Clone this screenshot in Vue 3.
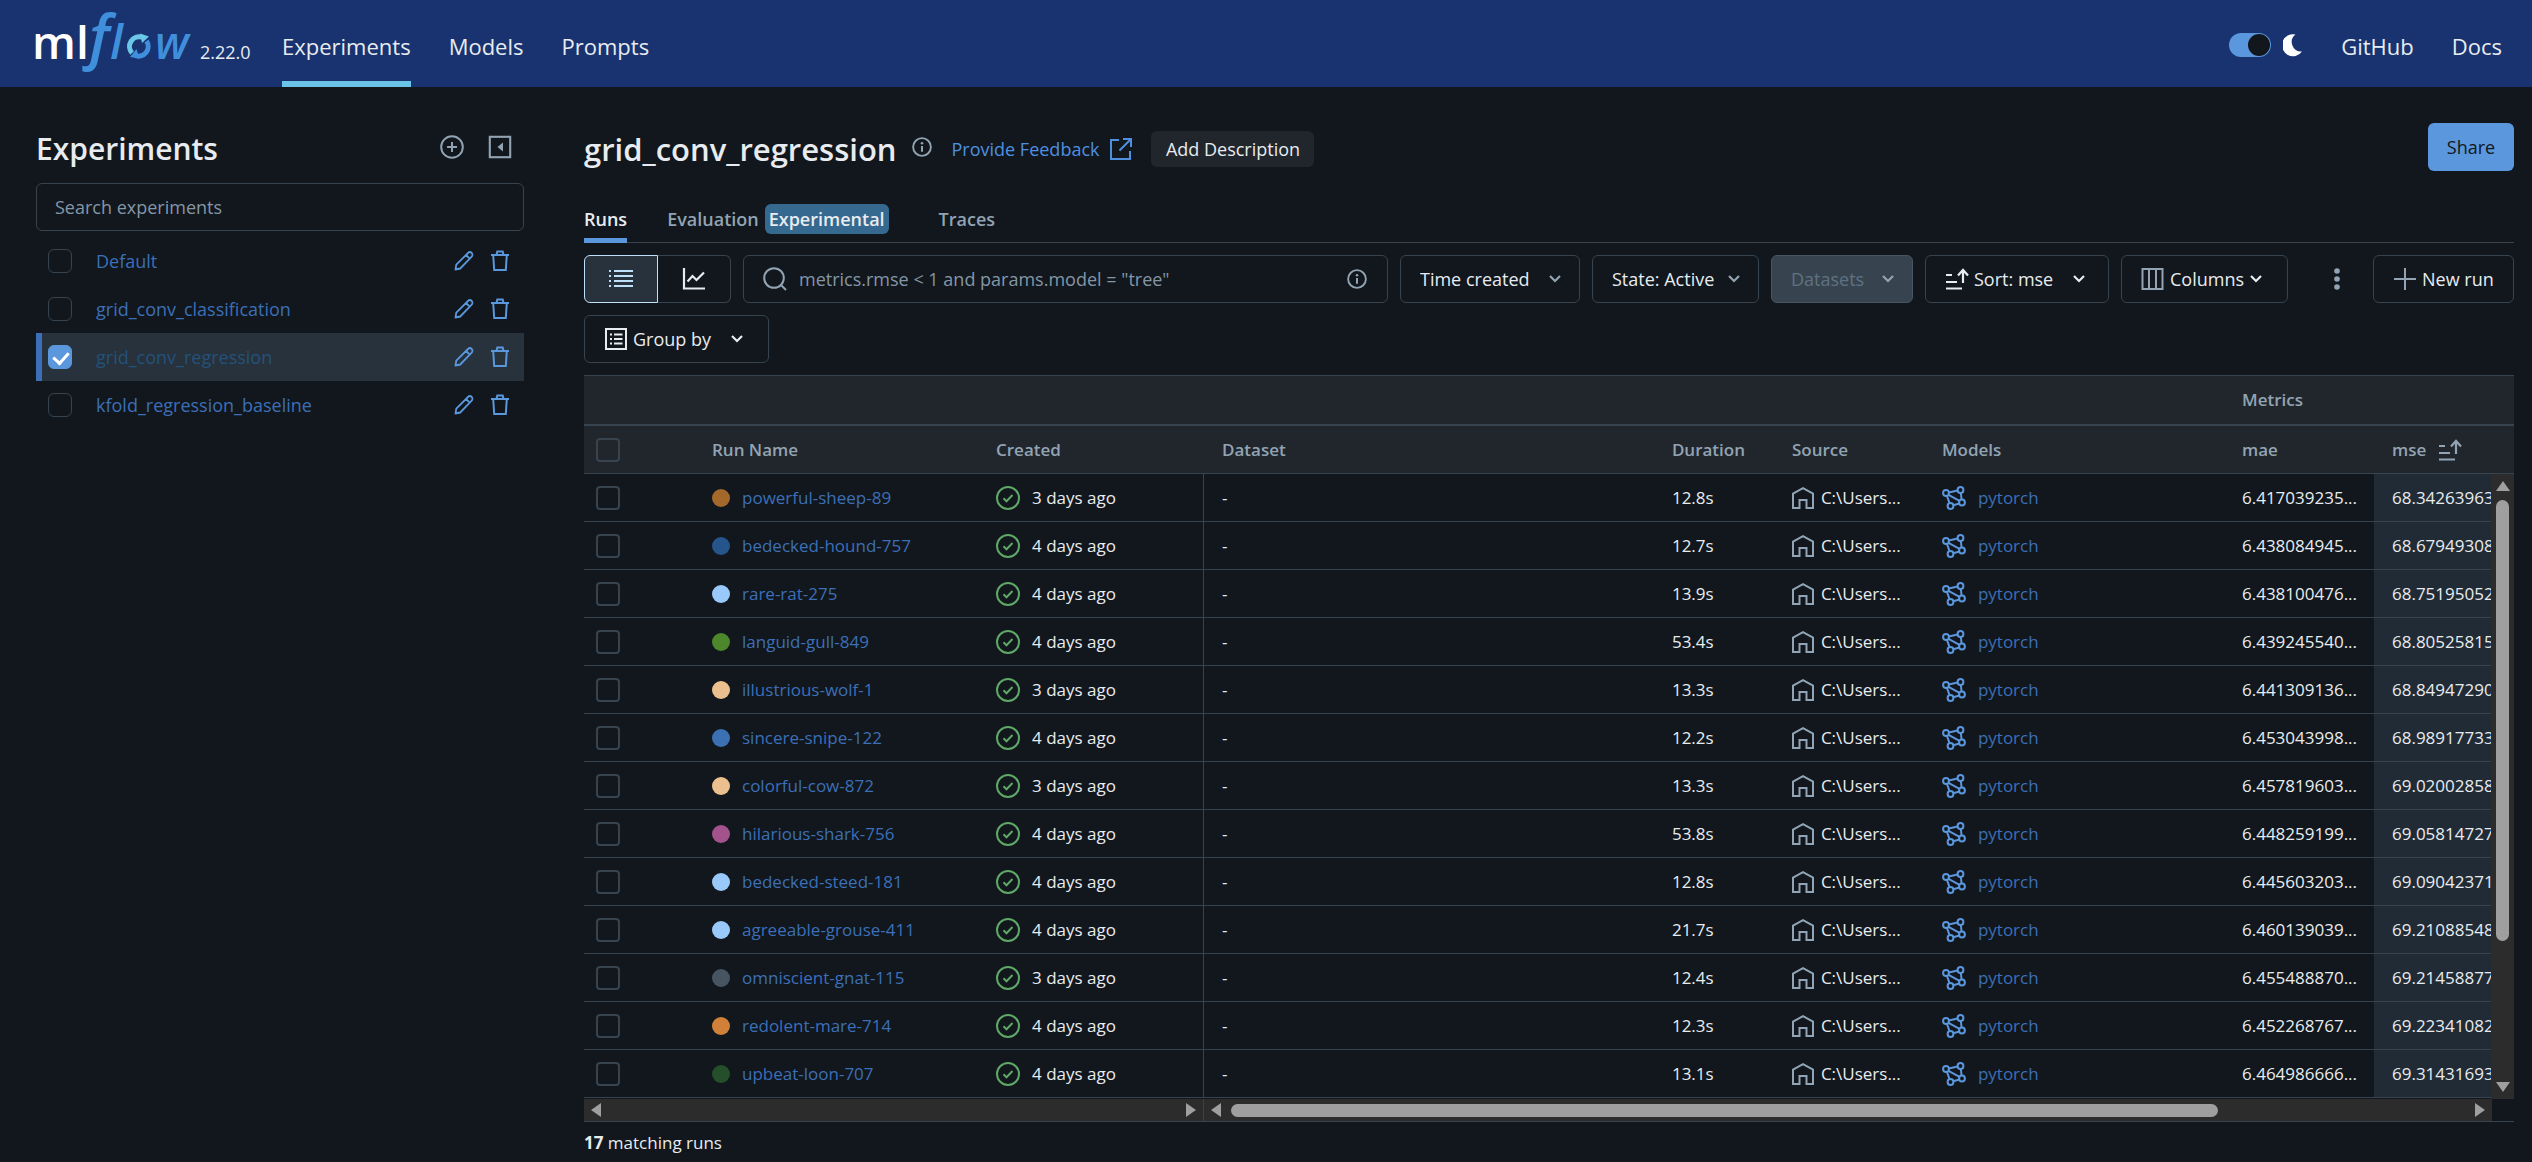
<script setup>
import { ref } from 'vue'

const experiments = ref([
  { name: 'Default', selected: false },
  { name: 'grid_conv_classification', selected: false },
  { name: 'grid_conv_regression', selected: true },
  { name: 'kfold_regression_baseline', selected: false },
])

const runs = [
  { name: 'powerful-sheep-89', color: '#a4682a', created: '3 days ago', duration: '12.8s', mae: '6.417039235...', mse: '68.34263963' },
  { name: 'bedecked-hound-757', color: '#26558c', created: '4 days ago', duration: '12.7s', mae: '6.438084945...', mse: '68.67949308' },
  { name: 'rare-rat-275', color: '#99c8fa', created: '4 days ago', duration: '13.9s', mae: '6.438100476...', mse: '68.75195052' },
  { name: 'languid-gull-849', color: '#4c872b', created: '4 days ago', duration: '53.4s', mae: '6.439245540...', mse: '68.80525815' },
  { name: 'illustrious-wolf-1', color: '#ecc08e', created: '3 days ago', duration: '13.3s', mae: '6.441309136...', mse: '68.84947290' },
  { name: 'sincere-snipe-122', color: '#3b71b3', created: '4 days ago', duration: '12.2s', mae: '6.453043998...', mse: '68.98917733' },
  { name: 'colorful-cow-872', color: '#ecc08e', created: '3 days ago', duration: '13.3s', mae: '6.457819603...', mse: '69.02002858' },
  { name: 'hilarious-shark-756', color: '#a4528c', created: '4 days ago', duration: '53.8s', mae: '6.448259199...', mse: '69.05814727' },
  { name: 'bedecked-steed-181', color: '#99c8fa', created: '4 days ago', duration: '12.8s', mae: '6.445603203...', mse: '69.09042371' },
  { name: 'agreeable-grouse-411', color: '#99c8fa', created: '4 days ago', duration: '21.7s', mae: '6.460139039...', mse: '69.21088548' },
  { name: 'omniscient-gnat-115', color: '#475562', created: '3 days ago', duration: '12.4s', mae: '6.455488870...', mse: '69.21458877' },
  { name: 'redolent-mare-714', color: '#d1803a', created: '4 days ago', duration: '12.3s', mae: '6.452268767...', mse: '69.22341082' },
  { name: 'upbeat-loon-707', color: '#254f2b', created: '4 days ago', duration: '13.1s', mae: '6.464986666...', mse: '69.31431693' },
]
</script>

<template>
  <div class="page">
    <header class="topbar">
      <a href="#" class="brand" aria-label="mlflow">
        <svg width="164" height="87" viewBox="-6 -10 164 87">
          <g class="logo-text">
            <text x="-4" y="49" fill="#fff" font-size="46" font-weight="600">ml</text>
            <g fill="#3f8fdc" font-style="italic" font-weight="600">
              <text x="53" y="48" font-size="60">f</text>
              <text x="74" y="49" font-size="47">l</text>
              <text x="119" y="49" font-size="45">w</text>
            </g>
          </g>
          <path d="M96 43A9.700 9.700 0 0 1 106 27.200" fill="none" stroke="#6bc7e8" stroke-width="5" />
          <path d="M104 23.500l9 3-7 6.500z" fill="#6bc7e8" />
          <path d="M110.500 31A9.700 9.700 0 0 1 99 45.500" fill="none" stroke="#3f8fdc" stroke-width="5" />
          <path d="M94 47l6.500-8 3 9.500z" fill="#3f8fdc" />
        </svg>
      </a>
      <span class="version">2.22.0</span>
      <nav class="nav">
        <a href="#" class="active">Experiments</a>
        <a href="#">Models</a>
        <a href="#">Prompts</a>
      </nav>
      <div class="nav right">
        <label class="theme">
          <input type="checkbox" role="switch" checked aria-label="Dark theme" />
          <svg width="20" height="24" viewBox="0 0 20 24"><path d="M12.500 1.500A11 11 0 1 0 19 18.500 9.500 9.500 0 0 1 12.500 1.500z" fill="#fff" /></svg>
        </label>
        <a href="#">GitHub</a>
        <a href="#">Docs</a>
      </div>
    </header>

    <div class="body">
      <aside class="sidebar">
        <div class="side-head">
          <h2>Experiments</h2>
          <button class="icon-btn" aria-label="Create experiment">
            <svg width="24" height="24" viewBox="0 0 16 16" fill="none" stroke="currentColor" stroke-width="1.300"><circle cx="8" cy="8" r="7.200" /><path d="M8 4.700v6.600M4.700 8h6.600" /></svg>
          </button>
          <button class="icon-btn" aria-label="Collapse sidebar">
            <svg width="24" height="24" viewBox="0 0 16 16"><rect x="1.200" y="1.200" width="13.600" height="13.600" fill="none" stroke="currentColor" stroke-width="1.400" /><path d="M10 5v6L6.300 8z" fill="currentColor" /></svg>
          </button>
        </div>
        <input class="side-search" type="text" placeholder="Search experiments" aria-label="Search experiments" />
        <ul class="exp-list">
          <li v-for="e in experiments" :key="e.name" :class="{ selected: e.selected }">
            <input v-model="e.selected" type="checkbox" class="check" :aria-label="e.name" />
            <a href="#">{{ e.name }}</a>
            <button class="icon-btn blue" aria-label="Rename">
              <svg width="20" height="20" viewBox="0 0 20 20" fill="none" stroke="currentColor" stroke-width="1.800" stroke-linejoin="round"><path d="M1.500 18.500l.8-4.800L14 2a2.400 2.400 0 0 1 3.700 3.700L6.200 17.500zM12 4l3.800 3.700" /></svg>
            </button>
            <button class="icon-btn blue" aria-label="Delete">
              <svg width="20" height="22" viewBox="0 0 20 22" fill="none" stroke="currentColor" stroke-width="2"><path d="M1 5h18M6.500 5l.8-3.500h5.400l.8 3.500M3.200 5l1 15h11.600l1-15" /></svg>
            </button>
          </li>
        </ul>
      </aside>

      <main class="main">
        <div class="title-row">
          <h1>grid_conv_regression</h1>
          <svg class="muted" width="20" height="20" viewBox="0 0 16 16"><use href="#i-info" /></svg>
          <a href="#" class="feedback">Provide Feedback
            <svg width="24" height="24" viewBox="0 0 24 24" fill="none" stroke="currentColor" stroke-width="2"><path d="M10 3H2v19h19v-8M14 2h8v8M22 2L10.500 13.500" /></svg>
          </a>
          <button class="add-desc">Add Description</button>
          <button class="share">Share</button>
        </div>

        <div class="tabs" role="tablist">
          <button class="tab on" role="tab" aria-selected="true">Runs</button>
          <button class="tab" role="tab">Evaluation <span class="badge">Experimental</span></button>
          <button class="tab" role="tab">Traces</button>
        </div>

        <div class="toolbar">
          <div class="segment">
            <button class="on" aria-label="List view">
              <svg width="26" height="20" viewBox="0 0 26 20" stroke="currentColor" stroke-width="2"><path d="M1 2h2M6 2h19M1 7h2M6 7h19M1 12h2M6 12h19M1 17h2M6 17h19" /></svg>
            </button>
            <button aria-label="Chart view">
              <svg width="24" height="24" viewBox="0 0 24 24" fill="none" stroke="currentColor" stroke-width="2.200"><path d="M2 1v20.500h21M5.500 14.500l5-5.500 4 4L22 5.500" /></svg>
            </button>
          </div>
          <label class="search">
            <svg width="24" height="24" viewBox="0 0 24 24" fill="none" stroke="currentColor" stroke-width="2"><circle cx="11" cy="11" r="9.800" /><path d="M17.500 17.500l5.500 5.500" /></svg>
            <input type="text" placeholder='metrics.rmse &lt; 1 and params.model = "tree"' aria-label="Search runs" />
            <svg width="20" height="20" viewBox="0 0 16 16"><use href="#i-info" /></svg>
          </label>
          <div class="select w-time">
            <select aria-label="Time created"><option>Time created</option></select>
            <svg class="chev" width="14" height="10" viewBox="0 0 14 10"><use href="#i-chev" /></svg>
          </div>
          <div class="select w-state">
            <select aria-label="State"><option>State: Active</option></select>
            <svg class="chev" width="14" height="10" viewBox="0 0 14 10"><use href="#i-chev" /></svg>
          </div>
          <div class="select w-data">
            <select aria-label="Datasets" disabled><option>Datasets</option></select>
            <svg class="chev" width="14" height="10" viewBox="0 0 14 10"><use href="#i-chev" /></svg>
          </div>
          <button class="btn w-sort">
            <svg width="24" height="22" viewBox="0 0 24 22"><use href="#i-sort" /></svg>
            <span>Sort: mse</span>
            <svg class="end" width="14" height="10" viewBox="0 0 14 10"><use href="#i-chev" /></svg>
          </button>
          <button class="btn w-cols">
            <svg class="muted" width="24" height="24" viewBox="0 0 24 24" fill="none" stroke="currentColor" stroke-width="2"><path d="M1.500 2h20v20h-20zM8 2v20M15 2v20" /></svg>
            <span>Columns</span>
            <svg width="14" height="10" viewBox="0 0 14 10"><use href="#i-chev" /></svg>
          </button>
          <button class="kebab" aria-label="More actions">
            <svg width="6" height="24" viewBox="0 0 6 24" fill="currentColor"><circle cx="3" cy="4" r="2.800" /><circle cx="3" cy="12" r="2.800" /><circle cx="3" cy="20" r="2.800" /></svg>
          </button>
          <button class="btn w-new">
            <svg class="muted" width="24" height="24" viewBox="0 0 24 24" stroke="currentColor" stroke-width="2"><path d="M12 1v22M1 12h22" /></svg>
            <span>New run</span>
          </button>
        </div>
        <div class="toolbar second">
          <button class="btn w-group">
            <svg width="24" height="24" viewBox="0 0 24 24" fill="none" stroke="currentColor" stroke-width="2"><path d="M2 2h20v20H2zM6 7.500h2M10 7.500h8.500M6 12h2M10 12h8.500M6 16.500h2M10 16.500h8.500" /></svg>
            <span>Group by</span>
            <svg class="end" width="14" height="10" viewBox="0 0 14 10"><use href="#i-chev" /></svg>
          </button>
        </div>

        <div class="grid">
          <table>
            <colgroup>
              <col class="c-check" /><col class="c-name" /><col class="c-created" /><col /><col class="c-dur" /><col class="c-src" /><col class="c-model" /><col class="c-mae" /><col class="c-mse" />
            </colgroup>
            <thead>
              <tr class="group">
                <th colspan="7"></th>
                <th colspan="2">Metrics</th>
              </tr>
              <tr>
                <th><input type="checkbox" class="check thick" aria-label="Select all runs" /></th>
                <th>Run Name</th>
                <th>Created</th>
                <th class="wide">Dataset</th>
                <th>Duration</th>
                <th>Source</th>
                <th>Models</th>
                <th>mae</th>
                <th class="wide">
                  <span class="cell sorted">mse <svg width="24" height="22" viewBox="0 0 24 22"><use href="#i-sort" /></svg></span>
                </th>
              </tr>
            </thead>
            <tbody>
              <tr v-for="r in runs" :key="r.name">
                <td><input type="checkbox" class="check thick" :aria-label="'Select ' + r.name" /></td>
                <td><span class="cell name"><i class="dot" :style="{ background: r.color }"></i><a href="#">{{ r.name }}</a></span></td>
                <td class="pinned">
                  <span class="cell created">
                    <svg width="24" height="24" viewBox="0 0 24 24" fill="none" stroke="#5fa865" stroke-width="2"><circle cx="12" cy="12" r="11" /><path d="M7.500 12.200l3 3L16.500 9" /></svg>
                    {{ r.created }}
                  </span>
                </td>
                <td class="wide">-</td>
                <td>{{ r.duration }}</td>
                <td>
                  <span class="cell source">
                    <svg class="muted" width="22" height="22" viewBox="0 0 22 22" fill="none" stroke="currentColor" stroke-width="2"><path d="M1 21V6.500L11 1.200l10 5.300V21h-6.500v-8h-7v8z" /></svg>
                    C:\Users...
                  </span>
                </td>
                <td>
                  <span class="cell model">
                    <svg width="24" height="24" viewBox="0 0 24 24" fill="none" stroke="#5b97dc" stroke-width="2"><circle cx="4" cy="7" r="2.900" /><circle cx="18.500" cy="4" r="2.900" /><circle cx="20" cy="16.500" r="2.900" /><circle cx="8.500" cy="20" r="2.900" /><path d="M7 6.500l8.500-2M18.800 7l.8 6.500M17.300 17.500l-6 1.800M5 10l2.500 7.200M6.500 8.800l11 6" /></svg>
                    <a href="#">pytorch</a>
                  </span>
                </td>
                <td>{{ r.mae }}</td>
                <td class="wide mse">{{ r.mse }}</td>
              </tr>
            </tbody>
          </table>
          <div class="vscroll">
            <svg width="16" height="12" viewBox="0 0 16 12"><path d="M8 1l7 10H1z" /></svg>
            <span class="vthumb"></span>
            <svg width="16" height="12" viewBox="0 0 16 12"><path d="M8 11l7-10H1z" /></svg>
          </div>
        </div>
        <div class="hscroll">
          <div class="bar left">
            <svg width="12" height="16" viewBox="0 0 12 16"><path d="M1 8l10-7v14z" /></svg>
            <svg width="12" height="16" viewBox="0 0 12 16"><path d="M11 8L1 1v14z" /></svg>
          </div>
          <div class="bar rest">
            <svg width="12" height="16" viewBox="0 0 12 16"><path d="M1 8l10-7v14z" /></svg>
            <div class="track"><span class="hthumb"></span></div>
            <svg width="12" height="16" viewBox="0 0 12 16"><path d="M11 8L1 1v14z" /></svg>
          </div>
        </div>
        <p class="count"><b>17</b> matching runs</p>
      </main>
    </div>

    <svg class="defs" width="0" height="0" aria-hidden="true">
      <symbol id="i-info" viewBox="0 0 16 16"><circle cx="8" cy="8" r="7.100" fill="none" stroke="currentColor" stroke-width="1.500" /><path d="M8 7.200v4.600" stroke="currentColor" stroke-width="1.600" /><circle cx="8" cy="4.900" r="1" fill="currentColor" /></symbol>
      <symbol id="i-chev" viewBox="0 0 14 10"><path d="M2 2l5 5 5-5" fill="none" stroke="currentColor" stroke-width="2.200" /></symbol>
      <symbol id="i-sort" viewBox="0 0 24 22"><path d="M1 7h6M1 14h11M1 20.500h16M18 15V2.500M13 7.500l5-5.500 5 5.500" fill="none" stroke="currentColor" stroke-width="2.200" /></symbol>
    </svg>
  </div>
</template>

<style>
html,
body {
  margin: 0;
  background: #11171c;
}
</style>

<style scoped>
.page {
  font-family: "Open Sans", "Noto Sans", sans-serif;
  font-size: 18px;
  line-height: 24px;
  color: #e8ecf0;
}
* {
  box-sizing: border-box;
}
a {
  color: #3c6fb8;
  text-decoration: none;
}
button,
input,
select {
  font: inherit;
  color: inherit;
  margin: 0;
}
button {
  background: none;
  border: 0;
  padding: 0;
  white-space: nowrap;
}
svg {
  display: block;
  flex: none;
}
.muted {
  color: #92a4b3;
}
.defs {
  position: absolute;
}

/* top bar */
.topbar {
  display: flex;
  align-items: center;
  height: 87px;
  padding: 0 30px;
  background: #18336f;
}
.brand svg {
  overflow: visible;
}
.logo-text {
  font-family: "Open Sans", sans-serif;
}
.version {
  width: 82px;
  padding: 16px 0 0 6px;
}
.nav {
  display: flex;
  align-self: stretch;
  gap: 38px;
  margin-left: 6px;
  font-size: 22px;
}
.nav a {
  display: flex;
  align-items: center;
  padding-top: 10px;
  color: #e8ecf0;
  border-bottom: 6px solid transparent;
}
.nav a.active {
  border-color: #6bc5e8;
}
.nav.right {
  margin-left: auto;
}
.theme {
  display: flex;
  align-items: center;
  gap: 12px;
  padding-top: 3px;
}
.theme input {
  appearance: none;
  display: flex;
  justify-content: flex-end;
  width: 42px;
  height: 24px;
  padding: 1px;
  border-radius: 12px;
  background: #5b97dc;
}
.theme input::after {
  content: "";
  width: 22px;
  height: 22px;
  border-radius: 50%;
  background: #11171c;
}

/* sidebar */
.body {
  display: flex;
  gap: 60px;
  padding: 36px 18px 0 36px;
}
.sidebar {
  flex: 0 0 488px;
}
.side-head {
  display: flex;
  align-items: center;
  gap: 24px;
  height: 48px;
  padding-right: 12px;
}
h1,
h2 {
  margin: 0;
  padding-top: 4px;
  font-size: 31px;
  line-height: 44px;
  font-weight: 600;
}
h2 {
  flex: 1;
  font-size: 30px;
}
.icon-btn {
  color: #92a4b3;
}
.icon-btn.blue {
  color: #5b97dc;
}
.side-search {
  display: block;
  width: 100%;
  height: 48px;
  margin: 12px 0 6px;
  padding: 0 18px;
  background: none;
  border: 1px solid #37444f;
  border-radius: 6px;
}
::placeholder {
  color: #8496a6;
  opacity: 1;
}
.exp-list {
  margin: 0;
  padding: 0;
  list-style: none;
}
.exp-list li {
  display: flex;
  align-items: center;
  gap: 16px;
  height: 48px;
  padding: 0 14px 0 6px;
  border-left: 6px solid transparent;
}
.exp-list li.selected {
  background: #27323c;
  border-color: #3c6fb8;
}
.exp-list a {
  flex: 1;
  margin-left: 8px;
}
.exp-list li.selected a {
  color: #24517a;
}
.check {
  appearance: none;
  display: block;
  flex: none;
  width: 24px;
  height: 24px;
  border: 1px solid #37444f;
  border-radius: 6px;
}
.check.thick {
  border-width: 2px;
  border-radius: 4px;
}
.check:checked {
  border-color: #5b97dc;
  background: #5b97dc;
}
.check:checked::after {
  content: "";
  display: block;
  width: 7px;
  height: 12px;
  margin: 3px 0 0 7px;
  border: solid #fff;
  border-width: 0 3px 3px 0;
  transform: rotate(42deg);
}

/* title and tabs */
.main {
  flex: 1;
  min-width: 0;
}
.title-row {
  display: flex;
  align-items: center;
  height: 48px;
}
.title-row > .muted {
  margin: 0 20px 0 15px;
}
.feedback {
  display: flex;
  align-items: center;
  gap: 10px;
  margin-right: 18px;
  padding-top: 4px;
  color: #4f8fe0;
}
.add-desc {
  min-width: 163px;
  height: 36px;
  padding: 0 12px;
  margin-top: 4px;
  border-radius: 6px;
  background: #21262d;
}
.share {
  width: 86px;
  height: 48px;
  margin-left: auto;
  border-radius: 6px;
  background: #5b97dc;
  color: #11171c;
}
.tabs {
  display: flex;
  gap: 40px;
  height: 48px;
  margin-top: 24px;
  border-bottom: 1px solid #37444f;
}
.tab {
  display: flex;
  align-items: center;
  gap: 6px;
  height: 48px;
  padding-top: 5px;
  color: #92a4b3;
  font-weight: 600;
  border-bottom: 5px solid transparent;
}
.tab.on {
  color: #e8ecf0;
  border-color: #5b97dc;
}
.badge {
  margin-right: 10px;
  padding: 3px 4px;
  border-radius: 6px;
  background: #35698f;
  color: #e8ecf0;
}

/* toolbar */
.toolbar {
  display: flex;
  gap: 12px;
  margin-top: 12px;
}
.segment {
  display: flex;
}
.segment button {
  display: flex;
  align-items: center;
  justify-content: center;
  width: 73px;
  height: 48px;
  border: 1px solid #37444f;
  border-left: 0;
  border-radius: 0 6px 6px 0;
}
.segment button.on {
  width: 74px;
  border: 1px solid #bfe0fb;
  border-radius: 6px 0 0 6px;
  background: #27323c;
  color: #bfe0fb;
}
.search {
  display: flex;
  flex: 1;
  align-items: center;
  gap: 12px;
  min-width: 0;
  height: 48px;
  padding: 0 20px 0 19px;
  border: 1px solid #37444f;
  border-radius: 6px;
  color: #92a4b3;
}
.search input {
  flex: 1;
  min-width: 0;
  padding: 0;
  border: 0;
  background: none;
  outline: 0;
}
.btn,
.select select {
  height: 48px;
  border: 1px solid #37444f;
  border-radius: 6px;
}
.btn {
  display: flex;
  align-items: center;
  gap: 5px;
  padding: 0 19px;
}
.btn .end {
  margin-left: 14px;
}
.select {
  display: grid;
  align-items: center;
}
.select > * {
  grid-area: 1 / 1;
}
.select select {
  appearance: none;
  width: 100%;
  padding: 0 19px;
  background: none;
  opacity: 1;
}
.select select:disabled {
  background: #37444f;
  border-color: #475562;
  color: #5f7281;
}
.chev {
  justify-self: end;
  margin-right: 18px;
  color: #92a4b3;
  pointer-events: none;
}
.w-time {
  width: 180px;
}
.w-state {
  width: 167px;
}
.w-data {
  width: 142px;
}
.w-sort {
  width: 184px;
}
.w-cols {
  width: 167px;
}
.w-new {
  width: 141px;
}
.w-group {
  width: 185px;
}
.kebab {
  width: 61px;
  padding-left: 34px;
  color: #92a4b3;
}

/* runs table */
.grid {
  position: relative;
  margin-top: 12px;
}
table {
  width: 100%;
  table-layout: fixed;
  border-spacing: 0;
  border-top: 1px solid #37444f;
  font-size: 17px;
}
.c-check {
  width: 116px;
}
.c-name {
  width: 284px;
}
.c-created {
  width: 220px;
}
.c-dur {
  width: 120px;
}
.c-src {
  width: 150px;
}
.c-model {
  width: 300px;
}
.c-mae {
  width: 144px;
}
.c-mse {
  width: 140px;
}
th,
td {
  height: 48px;
  padding: 0 0 0 12px;
  border-bottom: 1px solid #37444f;
  text-align: left;
  white-space: nowrap;
  overflow: hidden;
}
th {
  background: #21262d;
  color: #92a4b3;
  font-weight: 600;
}
.group th {
  height: 50px;
  border-bottom-width: 2px;
}
.wide {
  padding-left: 18px;
}
.pinned {
  border-right: 1px solid #37444f;
}
.mse {
  background: #212b35;
}
.cell {
  display: flex;
  align-items: center;
}
.name {
  gap: 12px;
}
.dot {
  width: 18px;
  height: 18px;
  border-radius: 50%;
}
.created,
.model,
.sorted {
  gap: 12px;
}
.source {
  gap: 7px;
}
.vscroll {
  position: absolute;
  top: 99px;
  right: 0;
  bottom: -1px;
  display: flex;
  flex-direction: column;
  align-items: center;
  gap: 8px;
  width: 23px;
  padding: 6px 0;
  background: #2c2c2c;
  fill: #9f9f9f;
}
.vthumb {
  width: 13px;
  height: 72%;
  margin-bottom: auto;
  border-radius: 7px;
  background: #9f9f9f;
}
.hscroll {
  display: flex;
  margin-top: 1px;
  padding-right: 22px;
  border-bottom: 1px solid #37444f;
}
.bar {
  display: flex;
  align-items: center;
  justify-content: space-between;
  height: 22px;
  padding: 0 6px;
  background: #2c2c2c;
  fill: #9f9f9f;
}
.bar.left {
  width: 620px;
  border-right: 1px solid #37444f;
}
.bar.rest {
  flex: 1;
  gap: 9px;
}
.track {
  flex: 1;
}
.hthumb {
  display: block;
  width: 80%;
  height: 13px;
  border-radius: 7px;
  background: #9f9f9f;
}
.count {
  margin: 9px 0 7px;
  font-size: 17px;
}
</style>
